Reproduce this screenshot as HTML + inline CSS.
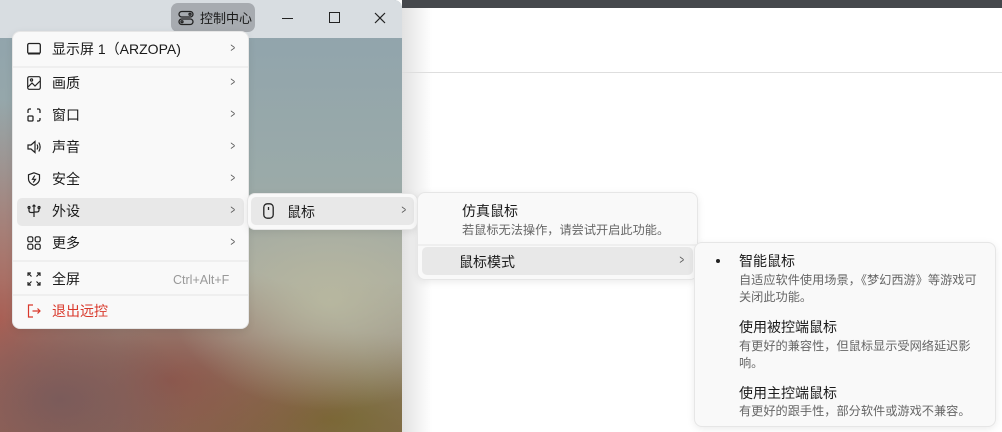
<!DOCTYPE html>
<html><head><meta charset="utf-8"><style>
*{margin:0;padding:0;box-sizing:border-box}
body{width:1002px;height:432px;overflow:hidden;position:relative;background:#fff;font-family:"Liberation Sans","Noto Sans CJK SC",sans-serif;color:#1a1a1a}
.abs{position:absolute}
.menu{position:absolute;background:#f9f9f9;border:1px solid #e6e6e6;border-radius:8px;box-shadow:0 2px 8px rgba(0,0,0,.08)}
.row{position:absolute;left:4px;right:4px;height:28px;border-radius:5px}
.hov{background:#e8e8e8}
.t{position:absolute;font-size:14px;line-height:16px;white-space:nowrap}
.ic{position:absolute;width:14px;height:14px}
.chev{position:absolute;font-size:13px;color:#555;transform:scaleX(.6)}
.sep{position:absolute;left:0;right:0;height:2px;background:#efefef}
.d{font-size:12.2px;color:#666;line-height:17px;position:absolute;white-space:nowrap}
</style></head><body>
<div class="abs" style="left:402px;top:0;width:600px;height:8px;background:#45484c"></div>
<div class="abs" style="left:402px;top:8px;width:30px;height:424px;background:linear-gradient(90deg,#e2e2e2,#fff)"></div>
<div class="abs" style="left:402px;top:72px;width:600px;height:1px;background:#dedede"></div>
<div class="abs" style="left:0;top:0;width:402px;height:432px;border-top-right-radius:8px;overflow:hidden;
background:
radial-gradient(ellipse 160px 110px at 330px 300px,rgba(185,185,160,.9),transparent),
radial-gradient(ellipse 130px 90px at 60px 400px,rgba(120,90,90,.9),transparent),
radial-gradient(ellipse 200px 120px at 170px 380px,rgba(140,80,70,.85),transparent),
radial-gradient(ellipse 200px 90px at 330px 420px,rgba(120,105,50,.95),transparent),
radial-gradient(ellipse 120px 220px at 0px 320px,rgba(170,80,70,.8),transparent),
linear-gradient(180deg,#8fa3ad 0%,#9aaaa9 40%,#a8aaa0 65%,#8a7060 100%)">
<div class="abs" style="left:0;top:0;width:402px;height:38px;background:#d8dde1"></div>
<div class="abs" style="left:171px;top:3px;width:84px;height:29px;background:#a7abb0;border-radius:7px"></div>
<svg class="abs" style="left:178px;top:10px" width="16" height="16" viewBox="0 0 16 16" fill="none" stroke="#222" stroke-width="1.3"><rect x="1" y="1.5" width="14" height="5.5" rx="2.75"/><rect x="1" y="9" width="14" height="5.5" rx="2.75"/><circle cx="4" cy="11.75" r="1"/><circle cx="12" cy="4.25" r="1"/></svg>
<div class="t" style="left:200px;top:11px;font-size:13px">控制中心</div>
<div class="abs" style="left:282px;top:18px;width:11px;height:1px;background:#222"></div>
<div class="abs" style="left:329px;top:12px;width:11px;height:11px;border:1.2px solid #222"></div>
<svg class="abs" style="left:374px;top:12px" width="12" height="12" viewBox="0 0 12 12" stroke="#222" stroke-width="1.2"><path d="M1 1L11 11M11 1L1 11"/></svg>
</div>

<div class="menu" style="left:12px;top:31px;width:237px;height:298px">
 <div class="sep" style="top:34px"></div>
 <div class="sep" style="top:228px"></div>
 <div class="sep" style="top:262px"></div>
 <div class="row hov" style="top:166px"></div>
</div>
<svg class="ic" style="left:27px;top:42px" viewBox="0 0 14 14" fill="none" stroke="#222" stroke-width="1.3"><rect x="0.7" y="1.5" width="12.6" height="10" rx="1.5"/><path d="M1 11.5H13" stroke-width="2"/></svg>
<svg class="ic" style="left:27px;top:76px" viewBox="0 0 14 14" fill="none" stroke="#222" stroke-width="1.2"><rect x="0.7" y="0.7" width="12.6" height="12.6" rx="1.5"/><path d="M1 11L5 7L8 10L13 5"/><circle cx="4.5" cy="4" r="1.1"/></svg>
<svg class="ic" style="left:27px;top:108px" viewBox="0 0 14 14" fill="none" stroke="#222" stroke-width="1.3"><path d="M1 5V2.5A1.5 1.5 0 0 1 2.5 1H4M10 1H11.5A1.5 1.5 0 0 1 13 2.5V5M13 10V11.5A1.5 1.5 0 0 1 11.5 13H10"/><rect x="1" y="8" width="5" height="5" rx="1"/></svg>
<svg class="ic" style="left:27px;top:140px" viewBox="0 0 14 14" fill="none" stroke="#222" stroke-width="1.2"><path d="M1 5H4L8 1.5V12.5L4 9H1Z"/><path d="M10 4.5Q11.5 7 10 9.5M11.8 2.5Q14.5 7 11.8 11.5"/></svg>
<svg class="ic" style="left:27px;top:172px" viewBox="0 0 14 14" fill="none" stroke="#222" stroke-width="1.2"><path d="M7 0.8L12.5 2.8V7Q12.5 11 7 13.3Q1.5 11 1.5 7V2.8Z"/><path d="M7.8 3.5L5.5 7.3H8.5L6.2 10.5"/></svg>
<svg class="ic" style="left:27px;top:204px" viewBox="0 0 14 14" fill="none" stroke="#222" stroke-width="1.2"><path d="M7 1V13M5.5 2.5L7 1L8.5 2.5M2 4V6.5Q2 8.5 4 8.5H7M12 4.5V6Q12 8 10 8H7"/><circle cx="2" cy="3.5" r="1"/><circle cx="12" cy="3.5" r="1"/></svg>
<svg class="ic" style="left:27px;top:236px" viewBox="0 0 14 14" fill="none" stroke="#222" stroke-width="1.2"><rect x="0.8" y="0.8" width="5" height="5" rx="1.5"/><rect x="8.2" y="0.8" width="5" height="5" rx="1.5"/><rect x="0.8" y="8.2" width="5" height="5" rx="1.5"/><rect x="8.2" y="8.2" width="5" height="5" rx="1.5"/></svg>
<svg class="ic" style="left:27px;top:272px" viewBox="0 0 14 14" fill="none" stroke="#222" stroke-width="1.2"><path d="M1 4V1H4M1 1L4.5 4.5M10 1H13V4M13 1L9.5 4.5M1 10V13H4M1 13L4.5 9.5M13 10V13H10M13 13L9.5 9.5"/></svg>
<svg class="ic" style="left:27px;top:304px" viewBox="0 0 14 14" fill="none" stroke="#d9382b" stroke-width="1.2"><path d="M6 1H1.5V13H6M5.5 7H13M10.5 4.5L13 7L10.5 9.5"/></svg>
<div class="t" style="left:52px;top:41px">显示屏 1（ARZOPA)</div>
<div class="t" style="left:52px;top:75px">画质</div>
<div class="t" style="left:52px;top:107px">窗口</div>
<div class="t" style="left:52px;top:139px">声音</div>
<div class="t" style="left:52px;top:171px">安全</div>
<div class="t" style="left:52px;top:203px">外设</div>
<div class="t" style="left:52px;top:235px">更多</div>
<div class="t" style="left:52px;top:271px">全屏</div>
<div class="t" style="left:52px;top:303px;color:#d9382b">退出远控</div>
<div class="t" style="left:173px;top:272px;font-size:12.5px;color:#999">Ctrl+Alt+F</div>
<div class="chev" style="left:229px;top:40px">&gt;</div>
<div class="chev" style="left:229px;top:74px">&gt;</div>
<div class="chev" style="left:229px;top:106px">&gt;</div>
<div class="chev" style="left:229px;top:138px">&gt;</div>
<div class="chev" style="left:229px;top:170px">&gt;</div>
<div class="chev" style="left:229px;top:202px">&gt;</div>
<div class="chev" style="left:229px;top:234px">&gt;</div>

<div class="menu" style="left:247px;top:193px;width:171px;height:37px"><div class="row hov" style="top:3px;left:3px;right:3px"></div></div>
<svg class="abs" style="left:263px;top:203px" width="11" height="16" viewBox="0 0 11 16" fill="none" stroke="#222" stroke-width="1.3"><rect x="0.8" y="0.8" width="9.4" height="14.4" rx="3.5"/><path d="M5.5 4V7"/></svg>
<div class="t" style="left:287px;top:204px">鼠标</div>
<div class="chev" style="left:400px;top:202px">&gt;</div>

<div class="menu" style="left:417px;top:192px;width:281px;height:88px">
 <div class="sep" style="top:51px"></div>
 <div class="row hov" style="top:54px;right:4px;left:4px"></div>
</div>
<div class="t" style="left:462px;top:203px">仿真鼠标</div>
<div class="d" style="left:462px;top:222px">若鼠标无法操作，请尝试开启此功能。</div>
<div class="t" style="left:459px;top:254px">鼠标模式</div>
<div class="chev" style="left:678px;top:252px">&gt;</div>

<div class="menu" style="left:694px;top:242px;width:302px;height:185px"></div>
<div class="abs" style="left:716px;top:259px;width:4px;height:4px;border-radius:2px;background:#222"></div>
<div class="t" style="left:739px;top:253px">智能鼠标</div>
<div class="d" style="left:739px;top:272px">自适应软件使用场景，《梦幻西游》等游戏可</div>
<div class="d" style="left:739px;top:289px">关闭此功能。</div>
<div class="t" style="left:739px;top:319px">使用被控端鼠标</div>
<div class="d" style="left:739px;top:338px">有更好的兼容性，但鼠标显示受网络延迟影</div>
<div class="d" style="left:739px;top:355px">响。</div>
<div class="t" style="left:739px;top:385px">使用主控端鼠标</div>
<div class="d" style="left:739px;top:403px">有更好的跟手性，部分软件或游戏不兼容。</div>
</body></html>
